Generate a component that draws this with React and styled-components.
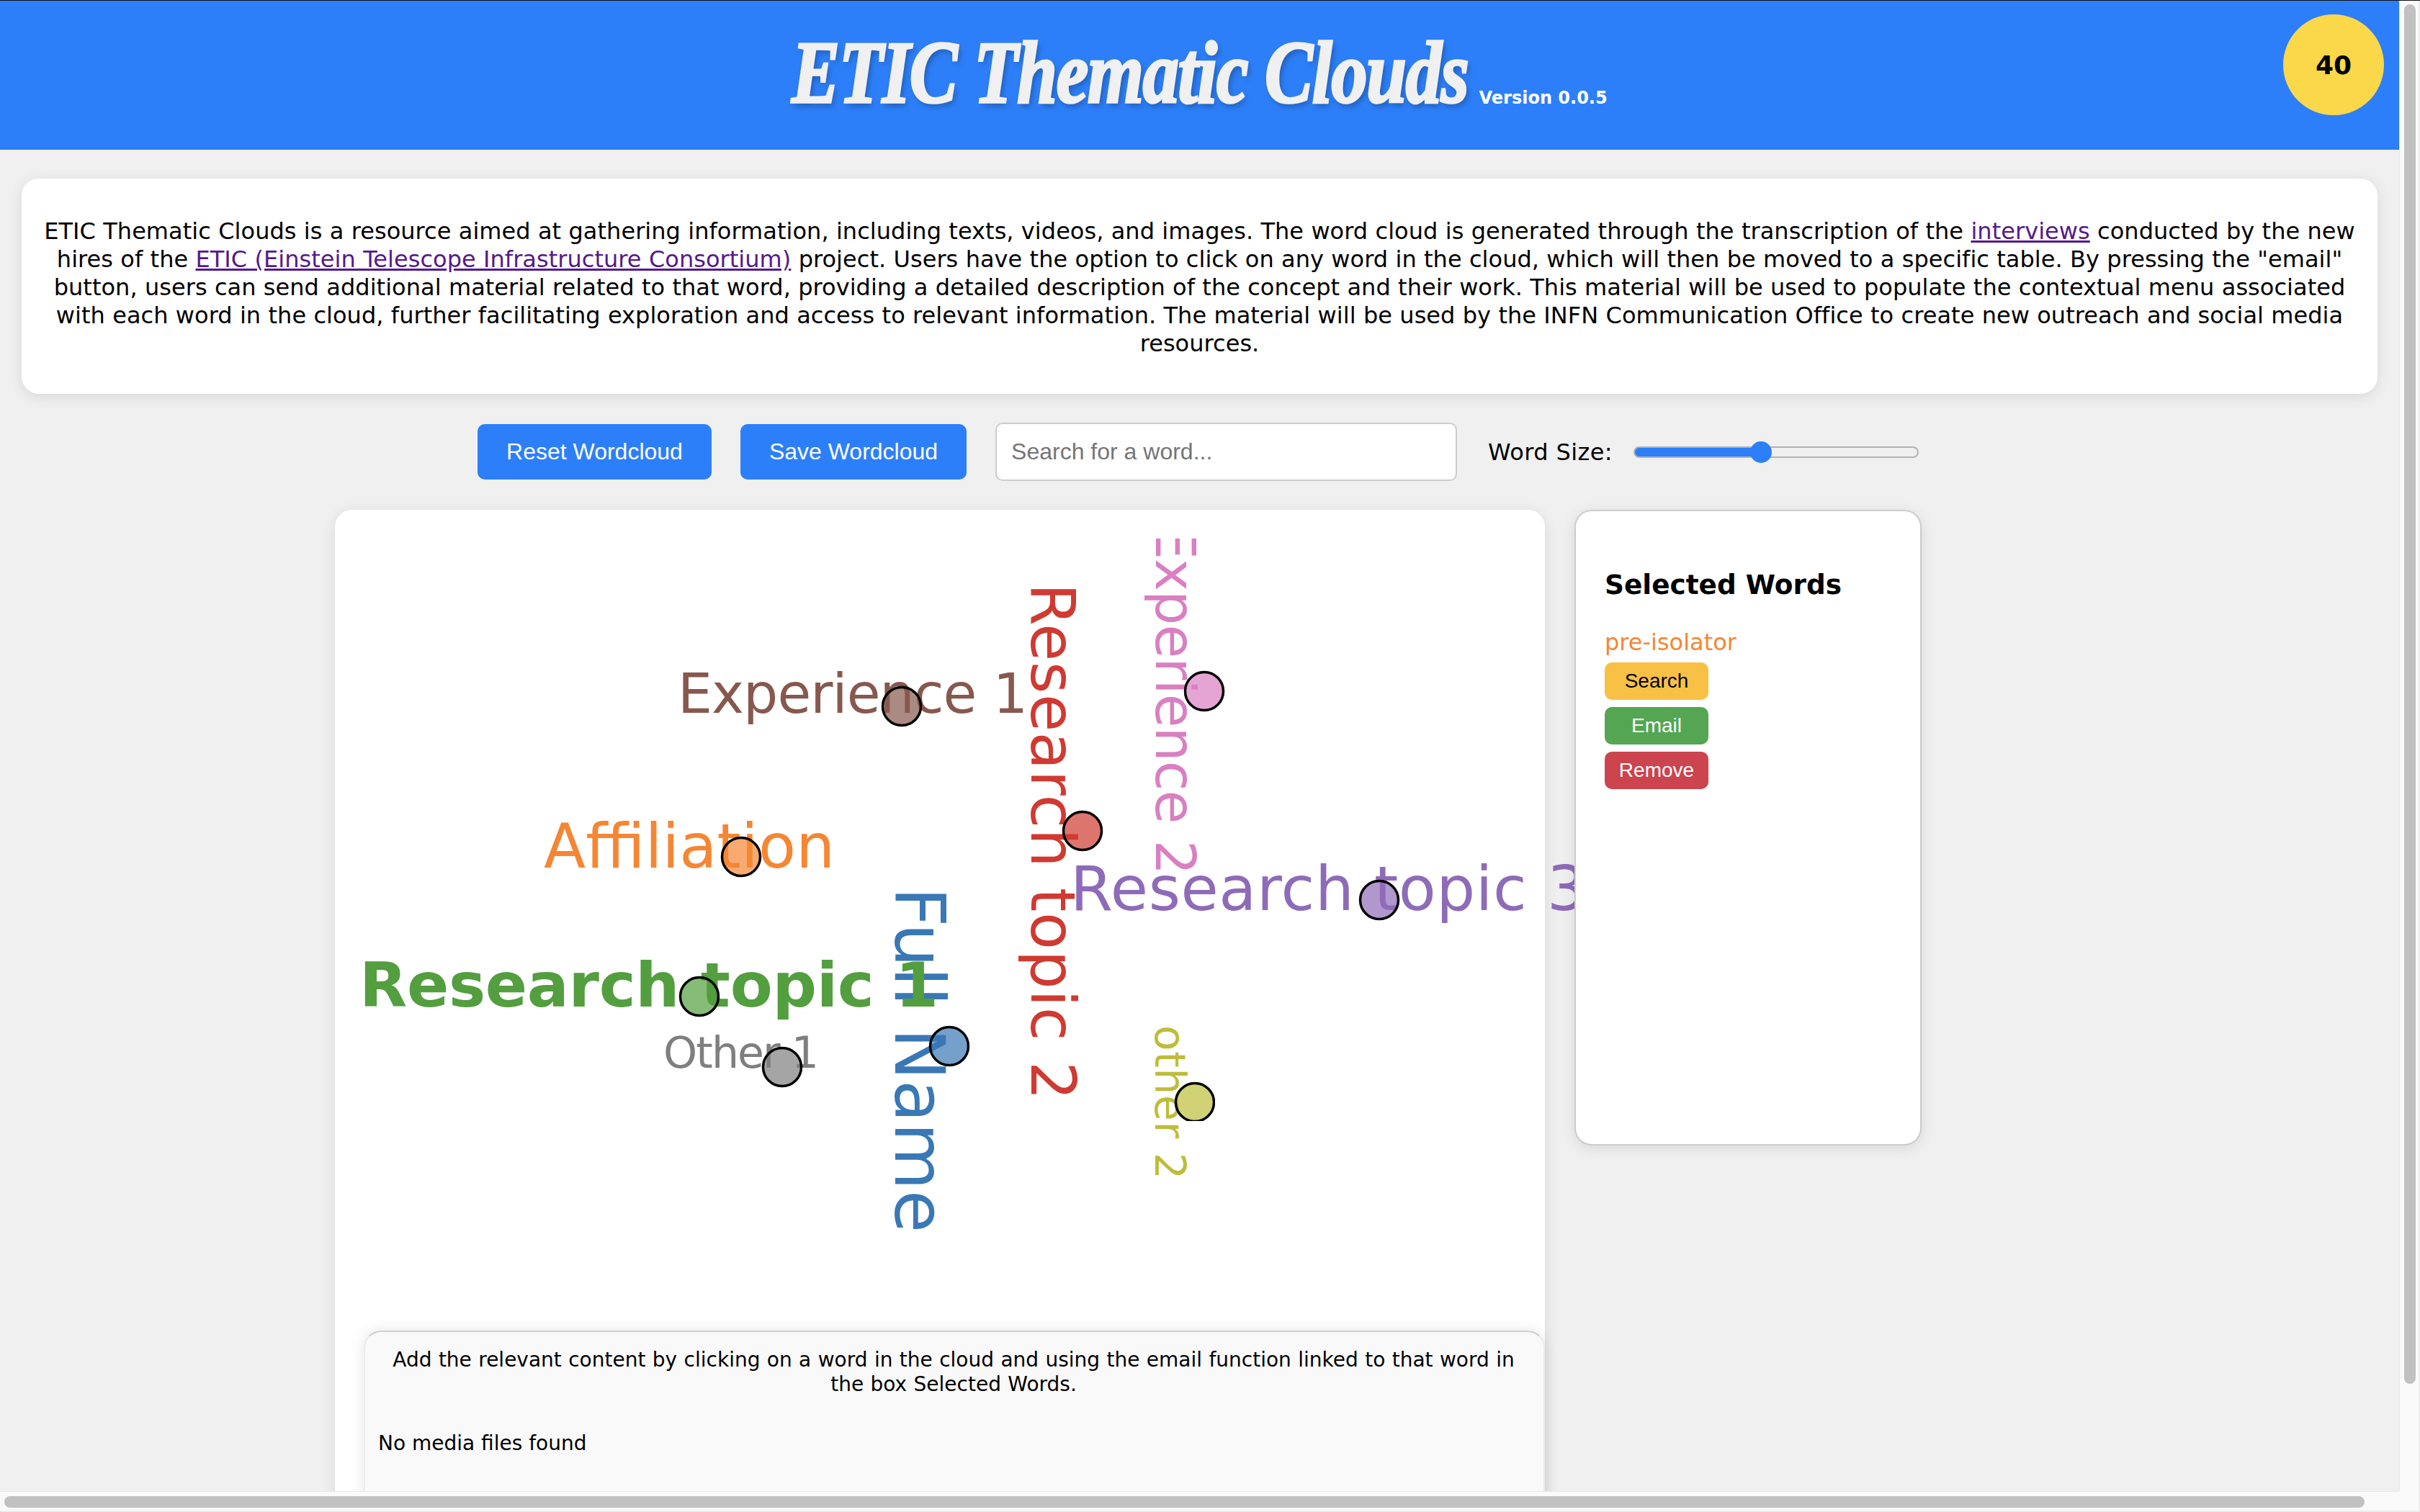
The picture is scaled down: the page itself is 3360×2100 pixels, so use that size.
import React from 'react';
import styled, { createGlobalStyle } from 'styled-components';

const Global = createGlobalStyle`
  html, body { margin: 0; padding: 0; overflow: hidden; background: #f0f0f0; }
  * { box-sizing: border-box; }
`;

const Viewport = styled.div`
  display: grid;
  grid-template-columns: 1fr 29px;
  grid-template-rows: 1fr 29px;
  width: 3360px;
  height: 2100px;
  border-top: 1px solid #111;
  font-family: "DejaVu Sans", Verdana, sans-serif;
`;
const Page = styled.div`
  overflow: hidden;
  background: #f0f0f0;
  min-width: 0;
  min-height: 0;
`;
const VTrack = styled.div`
  background: #fafafa;
  border-left: 1px solid #e8e8e8;
  border-right: 2px solid #ececec;
  padding: 5px 4px 0 6px;
`;
const VThumb = styled.div`
  width: 16px;
  height: 1916px;
  border-radius: 8px;
  background: #c1c1c1;
`;
const HTrack = styled.div`
  background: #fafafa;
  border-top: 1px solid #e8e8e8;
  border-bottom: 2px solid #ececec;
  padding: 6px 0 0 6px;
`;
const HThumb = styled.div`
  width: 3277px;
  height: 16px;
  border-radius: 8px;
  background: #c1c1c1;
`;
const Corner = styled.div`
  background: #fafafa;
  border-right: 2px solid #ececec;
  border-bottom: 2px solid #ececec;
`;
const Header = styled.header`
  position: relative;
  display: flex;
  align-items: baseline;
  justify-content: center;
  gap: 15px;
  height: 207px;
  padding-top: 53px;
  background: #2d7ff9;
`;
const Title = styled.h1`
  display: inline-block;
  margin: 0;
  font-family: "Liberation Serif", serif;
  font-weight: 700;
  font-style: italic;
  font-size: 100px;
  line-height: 114px;
  letter-spacing: -1.1px;
  color: #f0f0f0;
  -webkit-text-stroke: 3px #f0f0f0;
  text-shadow: 3px 4px 8px rgba(0, 0, 0, 0.3);
  transform: scaleY(1.22);
  transform-origin: 50% 86%;
`;
const Version = styled.span`
  font-size: 24px;
  font-weight: 700;
  color: #fff;
`;
const Badge = styled.div`
  position: absolute;
  top: 19px;
  right: 21px;
  width: 140px;
  height: 140px;
  border-radius: 50%;
  background: #fbd74a;
  display: flex;
  align-items: center;
  justify-content: center;
  font-size: 36px;
  font-weight: 700;
  color: #000;
`;
const Intro = styled.section`
  margin: 40px 30px 0;
  height: 299px;
  padding: 54px 20px 0;
  border-radius: 24px;
  background: #fff;
  box-shadow: 0 4px 20px rgba(0, 0, 0, 0.1);
  font-size: 32px;
  line-height: 39px;
  letter-spacing: 0.04px;
  word-spacing: 0.1px;
  text-align: center;
  color: #000;
  a { color: #551a8b; }
`;
const Controls = styled.div`
  display: flex;
  align-items: center;
  justify-content: center;
  margin-top: 40px;
  height: 81px;
  padding-right: 4px;
`;
const Primary = styled.button`
  height: 77px;
  margin-right: 40px;
  padding: 0 40px;
  border: none;
  border-radius: 10px;
  background: #2d7ff9;
  color: #fff;
  font-family: "Liberation Sans", Arial, sans-serif;
  font-size: 32px;
`;
const Search = styled.input`
  width: 641px;
  height: 81px;
  margin-right: 43px;
  padding: 0 20px;
  border: 2px solid #ccc;
  border-radius: 10px;
  background: #fff;
  font-family: "Liberation Sans", Arial, sans-serif;
  font-size: 32px;
  &::placeholder { color: #757575; }
`;
const SizeLabel = styled.label`
  margin-right: 29px;
  font-size: 32px;
  letter-spacing: 0.4px;
  color: #000;
`;
const Slider = styled.input`
  -webkit-appearance: none;
  appearance: none;
  width: 396px;
  height: 32px;
  margin: 0;
  background: transparent;
  &::-webkit-slider-runnable-track {
    height: 16px;
    border-radius: 8px;
    border: 2px solid #b2b2b2;
    background: linear-gradient(to right, #2d7ff9 0 45%, #efefef 45% 100%);
  }
  &::-webkit-slider-thumb {
    -webkit-appearance: none;
    width: 30px;
    height: 30px;
    margin-top: -9px;
    border-radius: 50%;
    background: #2d7ff9;
  }
`;
const Workspace = styled.main`
  display: flex;
  align-items: flex-start;
  gap: 41px;
  margin: 40px 0 0 465px;
`;
const CloudCard = styled.section`
  flex: 0 0 1680px;
  min-width: 0;
  padding-top: 40px;
  height: 1500px;
  border-radius: 24px;
  background: #fff;
  box-shadow: 0 4px 20px rgba(0, 0, 0, 0.1);
`;
const CloudSvg = styled.svg`
  display: block;
  width: 1721px;
  height: 1100px;
`;
const Word = styled.text`
  font-family: "DejaVu Sans", Verdana, sans-serif;
`;
const Media = styled.div`
  margin-left: 40px;
  height: 400px;
  padding: 22px 20px 22px 18px;
  border-radius: 24px;
  border: 2px solid #d0d0d0;
  border-bottom: none;
  border-left-color: #ececec;
  border-right-color: #ececec;
  background: #f9f9f9;
  box-shadow: 0 0 20px rgba(0, 0, 0, 0.1);
  font-size: 28px;
  line-height: 34px;
  color: #000;
`;
const MediaHint = styled.p`
  margin: 0 0 48px;
  text-align: center;
  word-spacing: 0.5px;
`;
const MediaEmpty = styled.p`
  margin: 0;
`;
const Panel = styled.aside`
  position: relative;
  flex: 0 0 482px;
  height: 883px;
  padding: 80px 40px 0;
  border: 2px solid #ccc;
  border-radius: 24px;
  background: #fff;
  box-shadow: 0 4px 20px rgba(0, 0, 0, 0.1);
`;
const PanelTitle = styled.h3`
  margin: 0 0 39px;
  font-size: 37.44px;
  line-height: 44px;
  font-weight: 700;
  color: #000;
`;
const Selected = styled.div`
  font-size: 32px;
  line-height: 39px;
  color: #f58634;
  margin-bottom: 8px;
`;
const Action = styled.button`
  display: block;
  width: 144px;
  height: 52px;
  margin-bottom: 10px;
  padding: 0;
  border: none;
  border-radius: 10px;
  background: ${(p) => p.$bg};
  color: ${(p) => p.$fg};
  font-family: "Liberation Sans", Arial, sans-serif;
  font-size: 28px;
`;

const words = [
  { t: 'Full Name', x: 1243, y: 1232, r: 90, s: 96, c: '#3a78b5', l: 480 },
  { t: 'Experience 1', x: 941, y: 990, r: 0, s: 76, c: '#87584e', l: 486 },
  { t: 'Affiliation', x: 755, y: 1205, r: 0, s: 85, c: '#f58634', l: 404 },
  { t: 'Research topic 1', x: 499, y: 1398, r: 0, s: 86, c: '#539e3f', b: 1, l: 804 },
  { t: 'Other 1', x: 921, y: 1483, r: 0, s: 60, c: '#7f7f7f', l: 216 },
  { t: 'Research topic 2', x: 1432, y: 810, r: 90, s: 85, c: '#cf3a32', l: 718 },
  { t: 'Experience 2', x: 1605, y: 729, r: 90, s: 76, c: '#d97fc2', l: 486 },
  { t: 'Research topic 3', x: 1486, y: 1264, r: 0, s: 85, c: '#8e6bb8', l: 716 },
  { t: 'other 2', x: 1604, y: 1424, r: 90, s: 58, c: '#bdbd3b', l: 214 },
];
const dots = [
  { x: 1318, y: 1453, c: '#3a78b5' },
  { x: 1252, y: 981, c: '#87584e' },
  { x: 1029, y: 1190, c: '#f58634' },
  { x: 971, y: 1384, c: '#539e3f' },
  { x: 1086, y: 1482, c: '#7f7f7f' },
  { x: 1503, y: 1154, c: '#cf3a32' },
  { x: 1672, y: 960, c: '#d97fc2' },
  { x: 1915, y: 1250, c: '#8e6bb8' },
  { x: 1659, y: 1531, c: '#bdbd3b', clip: true },
];

export default function App() {
  return (
    <>
      <Global />
      <Viewport>
        <Page>
          <Header>
            <Title>ETIC Thematic Clouds</Title>
            <Version>Version 0.0.5</Version>
            <Badge>40</Badge>
          </Header>
          <Intro>
            ETIC Thematic Clouds is a resource aimed at gathering information, including texts, videos, and images. The word cloud is generated through the transcription of the <a href="#interviews">interviews</a> conducted by the new<br />
            hires of the <a href="#etic">ETIC (Einstein Telescope Infrastructure Consortium)</a> project. Users have the option to click on any word in the cloud, which will then be moved to a specific table. By pressing the "email"<br />
            button, users can send additional material related to that word, providing a detailed description of the concept and their work. This material will be used to populate the contextual menu associated<br />
            with each word in the cloud, further facilitating exploration and access to relevant information. The material will be used by the INFN Communication Office to create new outreach and social media<br />
            resources.
          </Intro>
          <Controls>
            <Primary>Reset Wordcloud</Primary>
            <Primary>Save Wordcloud</Primary>
            <Search placeholder="Search for a word..." />
            <SizeLabel>Word Size:</SizeLabel>
            <Slider type="range" min="0" max="100" step="0.01" defaultValue="44.26" />
          </Controls>
          <Workspace>
            <CloudCard>
              <CloudSvg viewBox="465 748 1721 1100">
                <defs>
                  <clipPath id="dotClip">
                    <rect x="1600" y="1480" width="87" height="77" />
                  </clipPath>
                </defs>
                {words.map((w) => (
                  <Word
                    key={w.t}
                    x={w.x}
                    y={w.y}
                    fill={w.c}
                    fontSize={w.s}
                    fontWeight={w.b ? 700 : 400}
                    textLength={w.l}
                    lengthAdjust="spacing"
                    transform={w.r ? `rotate(${w.r} ${w.x} ${w.y})` : undefined}
                  >
                    {w.t}
                  </Word>
                ))}
                {dots.map((d) => (
                  <circle
                    key={d.x}
                    cx={d.x}
                    cy={d.y}
                    r="26.5"
                    fill={d.c}
                    fillOpacity="0.7"
                    stroke="#000"
                    strokeWidth="3.5"
                    clipPath={d.clip ? 'url(#dotClip)' : undefined}
                  />
                ))}
              </CloudSvg>
              <Media>
                <MediaHint>
                  Add the relevant content by clicking on a word in the cloud and using the email function linked to that word in the box Selected Words.
                </MediaHint>
                <MediaEmpty>No media files found</MediaEmpty>
              </Media>
            </CloudCard>
            <Panel>
              <PanelTitle>Selected Words</PanelTitle>
              <Selected>pre-isolator</Selected>
              <Action $bg="#f8c146" $fg="#000">Search</Action>
              <Action $bg="#54a652" $fg="#fff">Email</Action>
              <Action $bg="#cb444e" $fg="#fff">Remove</Action>
            </Panel>
          </Workspace>
        </Page>
        <VTrack><VThumb /></VTrack>
        <HTrack><HThumb /></HTrack>
        <Corner />
      </Viewport>
    </>
  );
}
